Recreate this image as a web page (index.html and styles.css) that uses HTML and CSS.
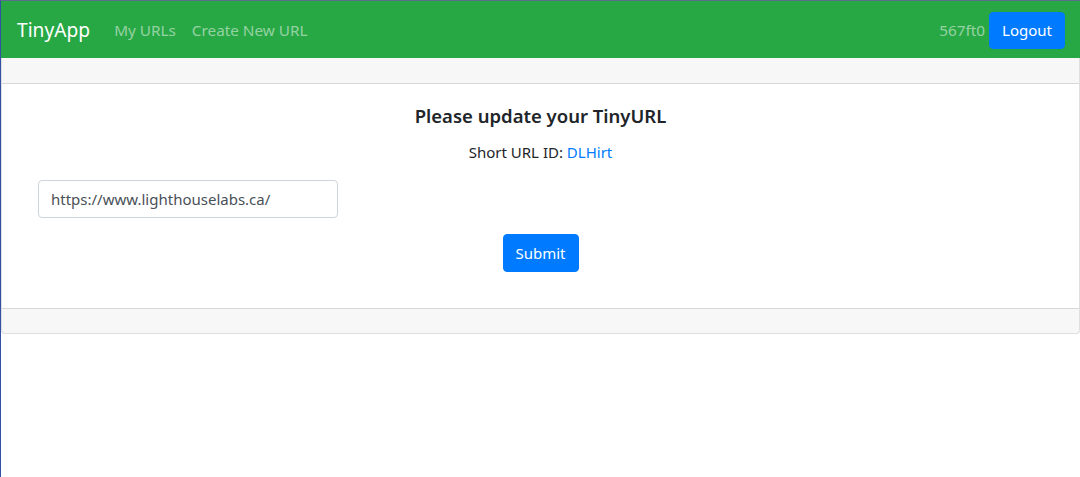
FILE: index.html
```html
<!DOCTYPE html>
<html>
<head>
<meta charset="utf-8">
<title>TinyApp</title>
<link rel="stylesheet" href="styles.css">
</head>
<body>
<nav class="navbar">
  <a class="brand" href="#">TinyApp</a>
  <div class="nav-links">
    <a class="nav-link" href="#">My URLs</a>
    <a class="nav-link" href="#">Create New URL</a>
  </div>
  <div class="nav-right">
    <span class="nav-user">567ft0</span>
    <button class="btn btn-primary btn-logout">Logout</button>
  </div>
</nav>
<main class="card">
  <div class="card-header"></div>
  <div class="card-body">
    <h5 class="card-title">Please update your TinyURL</h5>
    <p class="card-text">Short URL ID: <a href="#" class="link">DLHirt</a></p>
    <form class="form">
      <input class="form-control" type="text" value="https://www.lighthouselabs.ca/">
      <div class="form-actions">
        <button type="button" class="btn btn-primary btn-submit">Submit</button>
      </div>
    </form>
  </div>
  <div class="card-footer"></div>
</main>
</body>
</html>
```
FILE: styles.css
```css
* { box-sizing: border-box; }
html, body { margin: 0; padding: 0; }
body {
  font-family: "Noto Sans", "Open Sans", sans-serif;
  font-size: 15px;
  line-height: 24px;
  color: #212529;
  background: #fff;
  border-left: 1px solid #3450a6;
  border-top: 1px solid #5d6d8c;
  min-height: 477px;
}
.navbar {
  display: flex;
  align-items: center;
  height: 57px;
  padding: 1px 15px 0 16px;
  background: #28a745;
}
.brand {
  color: #fff;
  text-decoration: none;
  font-size: 19.2px;
  line-height: 30px;
  margin-right: 24px;
}
.nav-links { display: flex; gap: 16px; }
.nav-link {
  color: rgba(255,255,255,.5);
  text-decoration: none;
  font-size: 15.3px;
}
.nav-right {
  margin-left: auto;
  display: flex;
  align-items: center;
  gap: 4px;
}
.nav-user { color: rgba(255,255,255,.5); font-size: 15.3px; }
.btn {
  font-family: inherit;
  font-size: 15px;
  line-height: 24px;
  height: 38px;
  padding: 6px 12px;
  border: 1px solid transparent;
  border-radius: 4px;
  cursor: pointer;
}
.btn-primary { background: #007bff; border-color: #007bff; color: #fff; }
.btn-logout { width: 76px; height: 37px; padding: 5px 0; }
.btn-submit { width: 76px; padding: 6px 0; }
.card {
  display: block;
  border: 1px solid rgba(0,0,0,.125);
  border-top: 0;
  border-radius: 0 0 4px 4px;
}
.card-header {
  height: 26px;
  background: rgba(0,0,0,.03);
  border-bottom: 1px solid rgba(0,0,0,.125);
}
.card-body {
  padding: 20px;
  text-align: center;
}
.card-title {
  margin: 0 0 12px;
  font-size: 18.5px;
  font-weight: 600;
  line-height: 24px;
}
.card-text { margin: 0 0 16px; }
.link { color: #007bff; text-decoration: none; }
.form { text-align: left; }
.form-control {
  display: block;
  width: 300px;
  height: 38px;
  margin-left: 16px;
  padding: 6px 12px;
  font-family: inherit;
  font-size: 15px;
  color: #495057;
  border: 1px solid #ced4da;
  border-radius: 4px;
  background: #fff;
}
.form-actions {
  display: flex;
  justify-content: center;
  margin-top: 16px;
  margin-bottom: 16px;
}
.card-footer {
  height: 25px;
  background: rgba(0,0,0,.03);
  border-top: 1px solid rgba(0,0,0,.125);
}
```
